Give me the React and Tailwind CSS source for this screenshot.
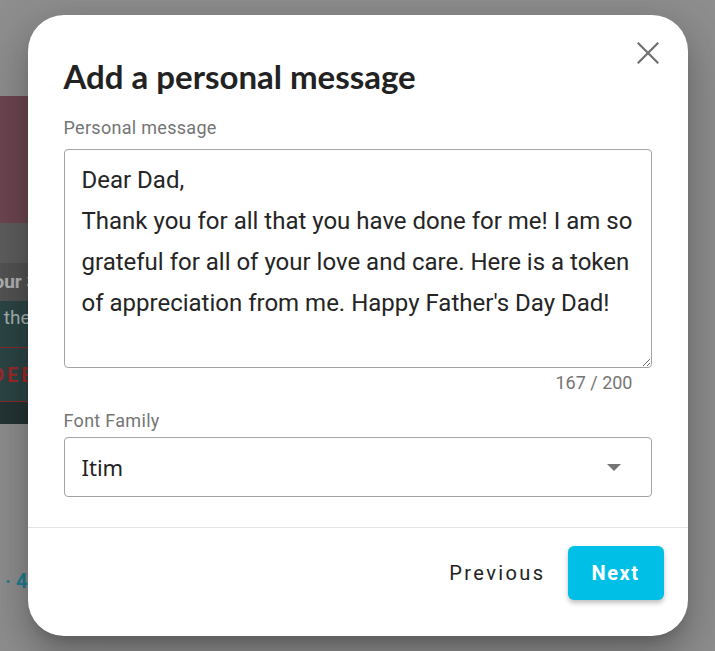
import { useState } from "react";

const initialMessage =
  "Dear Dad,\nThank you for all that you have done for me! I am so\ngrateful for all of your love and care. Here is a token\nof appreciation from me. Happy Father's Day Dad!";

function BackgroundPage() {
  return (
    <div className="flex flex-col pt-[96px] h-full bg-[#8e8e8e] font-['Roboto',sans-serif]">
      <div className="ml-[-60px] w-[300px] flex flex-col">
        <div className="h-[127px] bg-[#6d4651]" />
        <div className="h-[40px] bg-[#5e5e5e]" />
        <div className="h-[38px] bg-[#535353] flex items-center pl-[44px] text-[19px] font-bold text-[#b4b4b4]">
          your 3
        </div>
        <div className="bg-[#2c4545] flex flex-col">
          <div className="h-[34px] flex items-center pl-[44px] text-[19px] text-[#aab3b3]">in the</div>
          <div className="mt-[12px] border-t border-[#8b2b2b]" />
          <div className="h-[53px] flex items-center pl-[21px] text-[20px] font-bold tracking-[3px] text-[#9c2a2a]">
            REDEEM
          </div>
          <div className="border-t border-[#8b2b2b]" />
          <div className="h-[22px] bg-[#243434]" />
        </div>
      </div>
      <div className="mt-[142px] pl-[5px] text-[20px] font-bold text-[#1f7d90]">· 4</div>
    </div>
  );
}

export default function App() {
  const [message, setMessage] = useState(initialMessage);
  const [font, setFont] = useState("Itim");
  const count = message.replace(/\n/g, " ").length;

  return (
    <div className="relative w-full h-[651px] overflow-hidden">
      <BackgroundPage />

      <div className="absolute inset-0 flex items-center justify-center">
        <div className="w-[660px] bg-white rounded-[36px] flex flex-col font-['Roboto',sans-serif] shadow-[0_11px_15px_-7px_rgba(0,0,0,0.2),0_24px_38px_3px_rgba(0,0,0,0.14),0_9px_46px_8px_rgba(0,0,0,0.12)]">
          <div className="relative px-[36px] pt-[37px] pb-[30px] flex flex-col">
            <button className="absolute right-[29px] top-[27px] w-[22px] h-[22px] text-[#707070]">
              <svg viewBox="0 0 22 22" width="22" height="22" fill="none" stroke="currentColor" strokeWidth="2.2" strokeLinecap="square">
                <path d="M1.5 1.5 L20.5 20.5 M20.5 1.5 L1.5 20.5" />
              </svg>
            </button>

            <h2 className="font-['Lato',sans-serif] font-bold text-[33px] leading-[48px] text-[#222222]">
              Add a personal message
            </h2>

            <label className="mt-[16px] text-[18px] leading-[24px] tracking-[0.3px] text-[#757575]">
              Personal message
            </label>
            <textarea
              value={message}
              onChange={(e) => setMessage(e.target.value)}
              wrap="off"
              className="mt-[9px] h-[219px] w-full border border-[#a3a3a3] rounded-[4px] px-[17px] pt-[10px] text-[24px] leading-[41px] text-[#252525] overflow-hidden resize-y outline-none"
            />
            <div className="mt-[3px] pr-[19px] text-right text-[18px] leading-[24px] text-[#757575]">
              {count} / 200
            </div>

            <label className="mt-[14px] text-[18px] leading-[24px] tracking-[0.3px] text-[#757575]">
              Font Family
            </label>
            <button
              onClick={() => setFont(font)}
              className="mt-[4px] h-[60px] w-full border border-[#a3a3a3] rounded-[4px] flex items-center justify-between pl-[17px] pr-[30px]"
            >
              <span className="font-['Noto_Sans',sans-serif] text-[22px] text-[#222222]">{font}</span>
              <svg width="14" height="7" viewBox="0 0 14 7">
                <path d="M0 0 L14 0 L7 7 Z" fill="#757575" />
              </svg>
            </button>
          </div>

          <div className="border-t border-[#e3e3e3] flex items-center justify-end gap-[16px] pt-[18px] pb-[36px] pr-[24px]">
            <button className="px-[6px] h-[54px] text-[20px] font-normal tracking-[2.4px] text-[#1e1e1e]">
              Previous
            </button>
            <button className="w-[96px] h-[54px] rounded-[6px] bg-[#00bfe7] text-white text-[20px] font-bold tracking-[1.5px] shadow-[0_3px_5px_rgba(0,0,0,0.25)]">
              Next
            </button>
          </div>
        </div>
      </div>
    </div>
  );
}
